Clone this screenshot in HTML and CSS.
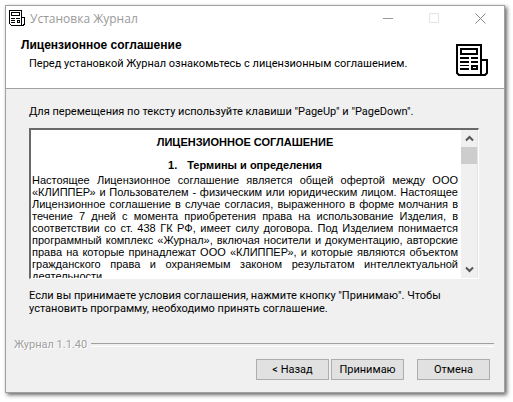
FILE: index.html
```html
<!DOCTYPE html>
<html lang="ru">
<head>
    <meta charset="UTF-8">
    <meta name="viewport" content="width=device-width, initial-scale=1.0">
    <title>Установка Журнал</title>
    <link rel="stylesheet" href="styles.css">
</head>
<body>
    <div class="window">
        <div class="titlebar">
            <svg class="app-icon" viewBox="0 0 16 16" shape-rendering="crispEdges">
                <path d="M.5.5h12v15H2.5l-2-2zM12.5 7.5h3v6l-1 2h-2" fill="none" stroke="#000"/>
                <path d="M2.5 2.5h8v3h-8zM8.500 10.500h2v2h-2z" fill="none" stroke="#000"/>
                <path d="M2 8h4v1H2zM7 8h4v1H7zM2 10h4v1H2zM2 12h4v1H2z"/>
            </svg>
            <span class="caption">Установка Журнал</span>
            <div class="window-controls">
                <button type="button" aria-label="Свернуть">
                    <svg width="11" height="11"><path d="M0 5.500h10" stroke="#999"/></svg>
                </button>
                <button type="button" aria-label="Развернуть" disabled>
                    <svg width="11" height="11"><path d="M.5.5h9v9h-9z" fill="none" stroke="#e3e3e3"/></svg>
                </button>
                <button type="button" aria-label="Закрыть">
                    <svg width="11" height="11"><path d="M.5.5l10 10M10.500.5l-10 10" stroke="#888"/></svg>
                </button>
            </div>
        </div>
        <header>
            <div>
                <h1>Лицензионное соглашение</h1>
                <p>Перед установкой Журнал ознакомьтесь с лицензионным соглашением.</p>
            </div>
            <svg class="header-icon" viewBox="0 0 32 32">
                <path d="M1 1h24v30H3l-2-2zM25 16h6v13l-2 2h-5" fill="none" stroke="#000" stroke-width="2"/>
                <path d="M5 5h16v5H5zM16 22h5v3h-5z" fill="none" stroke="#000" stroke-width="2"/>
                <path d="M4 13h9v2H4zM15 13h7v2h-7zM4 17h9v2H4zM15 17h7v2h-7zM4 21h9v1H4zM4 24h9v2H4z"/>
            </svg>
        </header>
        <main>
            <p>Для перемещения по тексту используйте клавиши "PageUp" и "PageDown".</p>
            <div class="license">
                <div class="license-text" tabindex="0">
                    <h2>ЛИЦЕНЗИОННОЕ СОГЛАШЕНИЕ</h2>
                    <h3><span>1.</span>Термины и определения</h3>
                    <p>Настоящее Лицензионное соглашение является общей офертой между ООО
                    «КЛИППЕР» и Пользователем - физическим или юридическим лицом. Настоящее
                    Лицензионное соглашение в случае согласия, выраженного в форме молчания в
                    течение 7 дней с момента приобретения права на использование Изделия, в
                    соответствии со ст. 438 ГК РФ, имеет силу договора. Под Изделием понимается
                    программный комплекс «Журнал», включая носители и документацию, авторские
                    права на которые принадлежат ООО «КЛИППЕР», и которые являются объектом
                    гражданского права и охраняемым законом результатом интеллектуальной
                    деятельности.</p>
                </div>
                <div class="scrollbar">
                    <button type="button" aria-label="Вверх">
                        <svg width="9" height="7"><path d="M1 5.500L4.500 2 8 5.500" fill="none" stroke="#555" stroke-width="2"/></svg>
                    </button>
                    <div class="thumb"></div>
                    <button type="button" aria-label="Вниз">
                        <svg width="9" height="7"><path d="M1 1.500L4.500 5 8 1.500" fill="none" stroke="#555" stroke-width="2"/></svg>
                    </button>
                </div>
            </div>
            <p>Если вы принимаете условия соглашения, нажмите кнопку "Принимаю". Чтобы установить программу, необходимо принять соглашение.</p>
        </main>
        <footer>
            <div class="branding">Журнал 1.1.40</div>
            <div class="actions">
                <button type="button">&lt; Назад</button>
                <button type="button">Принимаю</button>
                <button type="button" class="cancel">Отмена</button>
            </div>
        </footer>
    </div>
</body>
</html>
```

FILE: styles.css
```css
* {
    box-sizing: border-box;
}
body {
    margin: 0;
    padding: 5px 8px 9px 5px;
    background-color: #fff;
    font-family: Roboto, Tahoma, sans-serif;
    font-size: 11px;
    line-height: 13px;
    color: #000;
}
h1, h2, h3, p {
    margin: 0;
}
button {
    font: inherit;
    color: #000;
    padding: 0;
    border: none;
    background: none;
}
.window {
    border: 1px solid #a0a0a0;
    background-color: #f0f0f0;
    box-shadow: 2px 2px 4px rgba(0, 0, 0, 0.6);
}
.titlebar {
    display: flex;
    align-items: center;
    height: 24px;
    padding: 0 1px 0 3px;
    background-color: #fff;
}
.app-icon {
    width: 16px;
    height: 16px;
}
.caption {
    flex: 1;
    margin-left: 5px;
    font-family: "Open Sans", "Noto Sans", sans-serif;
    font-size: 12px;
    color: #999;
}
.window-controls {
    display: flex;
}
.window-controls button {
    display: flex;
    align-items: center;
    justify-content: center;
    width: 46px;
    height: 24px;
}
header {
    display: flex;
    justify-content: space-between;
    height: 59px;
    padding: 9px 16px 0 15px;
    border-bottom: 1px solid #a0a0a0;
    background-color: #fff;
}
header h1 {
    font-family: "Liberation Sans", Arial, sans-serif;
    font-size: 12px;
    line-height: 13px;
}
header p {
    margin: 5px 0 0 8px;
}
.header-icon {
    width: 32px;
    height: 32px;
    margin-top: 5px;
}
main {
    padding: 16px 25px 0 23px;
}
.license {
    display: flex;
    height: 151px;
    margin: 10px 0;
    border: 1px solid #fff;
    border-top: 2px solid #696969;
    border-left: 2px solid #696969;
    background-color: #fff;
}
.license-text {
    flex: 1;
    padding: 6px 3px 0 1px;
    overflow: hidden;
    font-family: "Liberation Sans", Arial, sans-serif;
    font-size: 11px;
    line-height: 12px;
    text-align: justify;
}
.license-text h2,
.license-text h3 {
    font-size: 11px;
    line-height: 12px;
    text-align: center;
}
.license-text h3 {
    margin: 11px 0 3px;
}
.license-text h3 span {
    margin-right: 10px;
}
.scrollbar {
    display: flex;
    flex-direction: column;
    width: 17px;
    border-right: 1px solid #e3e3e3;
    background-color: #f0f0f0;
}
.scrollbar button {
    display: flex;
    align-items: center;
    justify-content: center;
    height: 17px;
}
.scrollbar button:last-child {
    margin-top: auto;
}
.thumb {
    height: 17px;
    background-color: #cdcdcd;
}
footer {
    padding: 23px 10px 12px 8px;
}
.branding {
    display: flex;
    align-items: center;
    gap: 4px;
    color: #a0a0a0;
    text-shadow: 1px 1px #fff;
}
.branding::after {
    content: "";
    flex: 1;
    height: 2px;
    border-top: 1px solid #a0a0a0;
    border-bottom: 1px solid #fff;
}
.actions {
    display: flex;
    justify-content: flex-end;
    gap: 2px;
    margin-top: 8px;
    padding-right: 4px;
}
.actions button {
    width: 73px;
    height: 21px;
    border: 1px solid #adadad;
    background-color: #e1e1e1;
}
.actions .cancel {
    margin-left: 11px;
}
```
